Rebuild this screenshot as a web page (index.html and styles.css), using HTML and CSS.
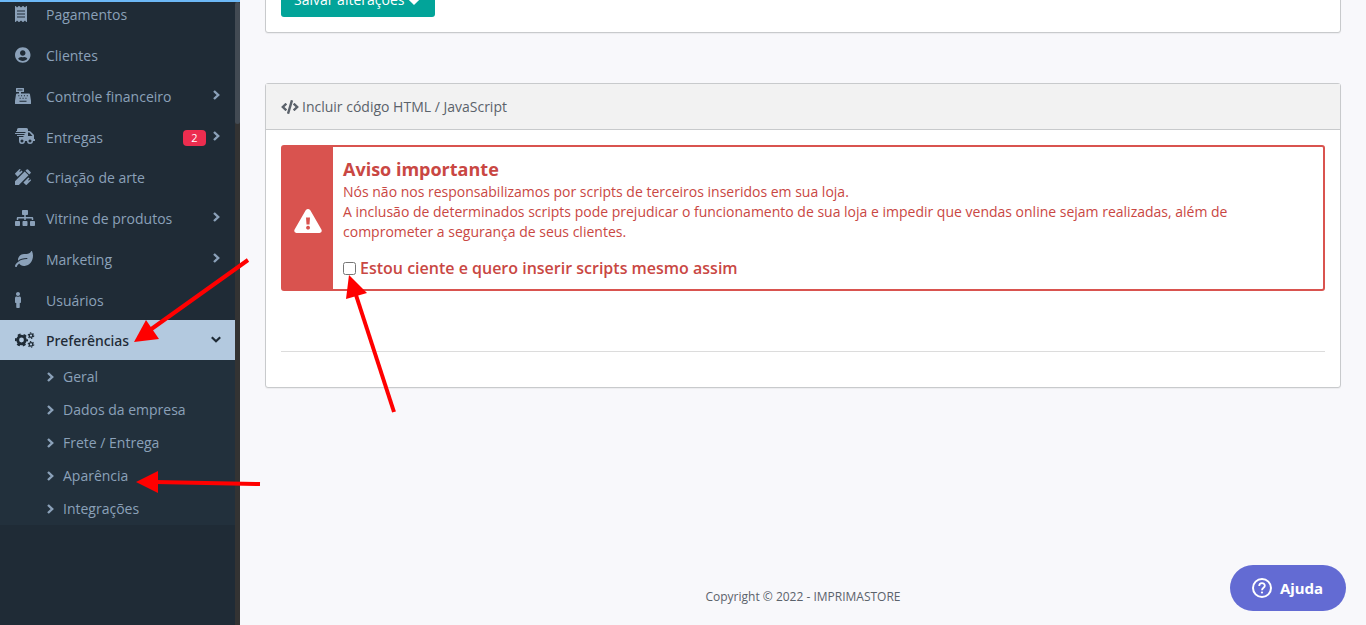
FILE: index.html
```html
<!DOCTYPE html>
<html lang="pt-BR">
<head>
  <meta charset="utf-8">
  <title>Aparência - Imprimastore</title>
  <link rel="stylesheet" href="styles.css">
</head>
<body>
  <svg class="sprite" aria-hidden="true">
    <symbol id="chevron-right" viewBox="0 0 10 12"><path d="M2 2 L6.2 6 L2 10" fill="none" stroke="currentColor" stroke-width="2.4"/></symbol>
    <symbol id="chevron-down" viewBox="0 0 12 10"><path d="M1.8 3.2 L6 7.2 L10.2 3.2" fill="none" stroke="currentColor" stroke-width="2.2"/></symbol>
  </svg>

  <div class="layout">
    <aside class="sidebar">
      <nav class="menu">
        <a href="#" class="menu-item">
          <svg class="icon" preserveAspectRatio="xMinYMid" viewBox="0 0 384 512"><path fill-rule="evenodd" d="M358.4 3.2L320 48 265.6 3.2a15.9 15.9 0 0 0-19.2 0L192 48 137.6 3.2a15.9 15.9 0 0 0-19.2 0L64 48 25.6 3.2C15-4.7 0 2.8 0 16v480c0 13.2 15 20.7 25.6 12.8L64 464l54.4 44.8a15.9 15.9 0 0 0 19.2 0L192 464l54.4 44.8a15.9 15.9 0 0 0 19.2 0L320 464l38.4 44.8c10.5 7.9 25.6.4 25.6-12.8V16c0-13.2-15-20.7-25.6-12.8zM64 336h256v32H64zM64 240h256v32H64zM64 144h256v32H64z"/></svg>
          <span class="label">Pagamentos</span>
        </a>
        <a href="#" class="menu-item">
          <svg class="icon" preserveAspectRatio="xMinYMid" viewBox="0 0 496 512"><path d="M248 8C111 8 0 119 0 256s111 248 248 248 248-111 248-248S385 8 248 8zm0 96c48.6 0 88 39.4 88 88s-39.4 88-88 88-88-39.4-88-88 39.4-88 88-88zm0 344c-58.7 0-111.3-26.6-146.5-68.2 18.8-35.4 55.6-59.8 98.5-59.8 2.4 0 4.8.4 7.1 1.1 13 4.2 26.6 6.9 40.9 6.9 14.3 0 28-2.7 40.9-6.9 2.3-.7 4.7-1.1 7.1-1.1 42.9 0 79.7 24.4 98.5 59.8C359.3 421.4 306.7 448 248 448z"/></svg>
          <span class="label">Clientes</span>
        </a>
        <a href="#" class="menu-item">
          <svg class="icon" preserveAspectRatio="xMinYMid" viewBox="0 0 512 512"><path fill-rule="evenodd" d="M48 0h224q16 0 16 16v96q0 16-16 16h-80v48h256q28 0 32 28l32 200v92q0 16-16 16H16q-16 0-16-16v-92l32-200q4-28 32-28h64v-48H48q-16 0-16-16V16Q32 0 48 0zM80 48v32h160V48zM104 232v32h36v-32zM192 232v32h36v-32zM284 232v32h36v-32zM376 232v32h36v-32zM148 312v32h36v-32zM240 312v32h36v-32zM332 312v32h36v-32zM144 408v32h224v-32z"/></svg>
          <span class="label">Controle financeiro</span>
          <svg class="arrow" width="10" height="12"><use href="#chevron-right"/></svg>
        </a>
        <a href="#" class="menu-item has-badge">
          <svg class="icon" preserveAspectRatio="xMinYMid" viewBox="0 0 640 512"><path fill-rule="evenodd" d="M112 0h256q48 0 48 48v48h48q18 0 32 14l98 98q14 14 14 32v112h16q16 0 16 16v32q0 16-16 16h-48a96 96 0 0 1-192 0h-64a96 96 0 0 1-192 0v-128h136q8 0 8-8v-16q0-8-8-8H64v-32h232q8 0 8-8v-16q0-8-8-8H8q-8 0-8-8v-16q0-8 8-8h320q8 0 8-8v-16q0-8-8-8H40q-8 0-8-8v-16q0-8 8-8h24V48q0-48 48-48zM416 144v112h144l-100-112zM224 368a48 48 0 1 0 .1 0zM480 368a48 48 0 1 0 .1 0z"/></svg>
          <span class="label">Entregas</span>
          <span class="badge">2</span>
          <svg class="arrow" width="10" height="12"><use href="#chevron-right"/></svg>
        </a>
        <a href="#" class="menu-item">
          <svg class="icon" preserveAspectRatio="xMinYMid" viewBox="0 0 512 512"><path d="M9 137 137 9q16-16 32 0l14 14-46 46 23 23 46-46 38 38L84 244 9 169q-16-16 0-32zM428 268l38 38-46 46 23 23 46-46 14 14q16 16 0 32L375 503q-16 16-32 0l-75-75zM496 94 418 16q-22-22-45 0l-40 40 123 123 40-40q22-22 0-45zM310 79 0 389V492q0 20 20 20h103l310-310z"/></svg>
          <span class="label">Criação de arte</span>
        </a>
        <a href="#" class="menu-item">
          <svg class="icon" preserveAspectRatio="xMinYMid" viewBox="0 0 640 512"><path d="M128 352H32c-17.67 0-32 14.33-32 32v96c0 17.67 14.33 32 32 32h96c17.67 0 32-14.33 32-32v-96c0-17.67-14.33-32-32-32zm-24-80h192v48h48v-48h192v48h48v-57.59c0-21.17-17.23-38.41-38.41-38.41H344v-64h40c17.67 0 32-14.33 32-32V32c0-17.67-14.33-32-32-32H256c-17.67 0-32 14.33-32 32v96c0 17.67 14.33 32 32 32h40v64H94.41C73.23 224 56 241.23 56 262.41V320h48v-48zm264 80h-96c-17.67 0-32 14.33-32 32v96c0 17.67 14.33 32 32 32h96c17.67 0 32-14.33 32-32v-96c0-17.67-14.33-32-32-32zm240 0h-96c-17.67 0-32 14.33-32 32v96c0 17.67 14.33 32 32 32h96c17.67 0 32-14.33 32-32v-96c0-17.67-14.33-32-32-32z"/></svg>
          <span class="label">Vitrine de produtos</span>
          <svg class="arrow" width="10" height="12"><use href="#chevron-right"/></svg>
        </a>
        <a href="#" class="menu-item">
          <svg class="icon" preserveAspectRatio="xMinYMid" viewBox="0 0 576 512"><path d="M546.2 9.7c-5.6-12.5-21.6-13-28.3-1.2C486.9 62.4 431.4 96 368 96h-80C182 96 96 182 96 288c0 7 .8 13.7 1.5 20.5C161.3 262.8 253.4 224 384 224c8.8 0 16 7.2 16 16s-7.2 16-16 16C132.6 256 26 410.1 2.4 468c-6.6 16.3 1.2 34.9 17.5 41.6 16.4 6.8 35-1.1 41.8-17.3 1.5-3.6 20.9-47.9 71.9-90.6 32.4 43.9 94 85.8 174.9 77.2C465.5 467.5 576 326.7 576 154.3c0-50.2-10.8-102.2-29.8-144.6z"/></svg>
          <span class="label">Marketing</span>
          <svg class="arrow" width="10" height="12"><use href="#chevron-right"/></svg>
        </a>
        <a href="#" class="menu-item">
          <svg class="icon" preserveAspectRatio="xMinYMid" viewBox="0 0 192 512"><path d="M96 0c35.346 0 64 28.654 64 64s-28.654 64-64 64-64-28.654-64-64S60.654 0 96 0m48 144h-11.36c-22.711 10.443-49.59 10.894-73.28 0H48c-26.51 0-48 21.49-48 48v136c0 13.255 10.745 24 24 24h16v136c0 13.255 10.745 24 24 24h64c13.255 0 24-10.745 24-24V352h16c13.255 0 24-10.745 24-24V192c0-26.51-21.49-48-48-48z"/></svg>
          <span class="label">Usuários</span>
        </a>
        <a href="#" class="menu-item active">
          <svg class="icon" preserveAspectRatio="xMinYMid" viewBox="0 0 20 16">
            <g fill="none" stroke="currentColor">
              <circle cx="6.5" cy="8" r="3.8" stroke-width="2.8"/>
              <circle cx="6.5" cy="8" r="5.6" stroke-width="1.9" stroke-dasharray="2.9 2.96" stroke-dashoffset="1.5"/>
              <circle cx="16" cy="3.6" r="1.8" stroke-width="1.3"/>
              <circle cx="16" cy="3.6" r="2.8" stroke-width="1.1" stroke-dasharray="1.4 1.53"/>
              <circle cx="16" cy="12.4" r="1.8" stroke-width="1.3"/>
              <circle cx="16" cy="12.4" r="2.8" stroke-width="1.1" stroke-dasharray="1.4 1.53"/>
            </g>
          </svg>
          <span class="label">Preferências</span>
          <svg class="arrow" width="12" height="10"><use href="#chevron-down"/></svg>
        </a>
        <div class="submenu">
          <a href="#"><svg width="10" height="12"><use href="#chevron-right"/></svg>Geral</a>
          <a href="#"><svg width="10" height="12"><use href="#chevron-right"/></svg>Dados da empresa</a>
          <a href="#"><svg width="10" height="12"><use href="#chevron-right"/></svg>Frete / Entrega</a>
          <a href="#"><svg width="10" height="12"><use href="#chevron-right"/></svg>Aparência</a>
          <a href="#"><svg width="10" height="12"><use href="#chevron-right"/></svg>Integrações</a>
        </div>
      </nav>
      <div class="scroll-track"><div class="scroll-thumb"></div></div>
    </aside>

    <main class="content">
      <section class="card card-save">
        <div class="card-body">
          <button type="button" class="btn-save">Salvar alterações
            <svg viewBox="0 0 12 12" width="14" height="14"><path d="M1.5 3.8 L6 8.2 L10.5 3.8" fill="none" stroke="currentColor" stroke-width="3"/></svg>
          </button>
        </div>
      </section>

      <section class="card">
        <div class="card-header">
          <svg viewBox="0 0 640 512" width="18" height="14"><path d="M278.9 511.5l-61-17.7c-6.4-1.8-10-8.5-8.2-14.9L346.2 8.7c1.8-6.4 8.5-10 14.9-8.2l61 17.7c6.4 1.8 10 8.5 8.2 14.9L293.8 503.3c-1.9 6.4-8.5 10.1-14.9 8.2zm-114-112.2l43.5-46.4c4.6-4.9 4.3-12.7-.8-17.2L117 256l90.6-79.7c5.1-4.5 5.5-12.3.8-17.2l-43.5-46.4c-4.5-4.8-12.1-5.1-17-.5L3.8 247.2c-5.1 4.7-5.1 12.8 0 17.5l144.1 135.1c4.9 4.6 12.5 4.4 17-.5zm327.2.6l144.1-135.1c5.1-4.7 5.1-12.8 0-17.5L492.1 112.1c-4.8-4.5-12.4-4.3-17 .5L431.6 159c-4.6 4.9-4.3 12.7.8 17.2L523 256l-90.6 79.7c-5.1 4.5-5.5 12.3-.8 17.2l43.5 46.4c4.5 4.9 12.1 5.1 17 .6z"/></svg>
          Incluir código HTML / JavaScript
        </div>
        <div class="card-body">
          <div class="alert">
            <div class="alert-icon">
              <svg viewBox="0 0 28 24" width="28" height="24"><path fill-rule="evenodd" d="M11.7 1.200Q14-1 16.300 1.200L27.400 20.500Q28.600 23.600 25.600 24H2.400Q-.6 23.600.6 20.500zM12 8.500L12.500 15.500H15.500L16 8.500zM14 16.800a1.900 1.900 0 1 0 .1 0z"/></svg>
            </div>
            <div class="alert-body">
              <h4>Aviso importante</h4>
              <p>Nós não nos responsabilizamos por scripts de terceiros inseridos em sua loja.<br>
              A inclusão de determinados scripts pode prejudicar o funcionamento de sua loja e impedir que vendas online sejam realizadas, além de comprometer a segurança de seus clientes.</p>
              <label class="accept" for="accept_scripts"><input type="checkbox" id="accept_scripts"> Estou ciente e quero inserir scripts mesmo assim</label>
            </div>
          </div>
          <hr>
        </div>
      </section>

      <footer>Copyright © 2022 - IMPRIMASTORE</footer>
    </main>
  </div>

  <button type="button" class="help">
    <svg viewBox="0 0 20 20" width="20" height="20"><circle cx="10" cy="10" r="9" fill="none" stroke="currentColor" stroke-width="2"/><path d="M7.2 8 C7.2 4.300 12.800 4.300 12.800 7.700 C12.800 9.800 10 9.700 10 12.200" fill="none" stroke="currentColor" stroke-width="1.8"/><circle cx="10" cy="14.5" r="1.1"/></svg>
    Ajuda
  </button>

  <svg class="pointers" width="270" height="175" viewBox="0 0 270 175" aria-hidden="true">
    <g stroke="#f00" stroke-width="4" fill="#f00">
      <path d="M248 10 L150 80"/>
      <path d="M134 92 L146 70 L159 89 Z" stroke="none"/>
      <path d="M260 234 L155 232"/>
      <path d="M136 232 L158 221 L158 243 Z" stroke="none"/>
      <path d="M394 162 L355 42"/>
      <path d="M349 25 L346 49 L367 43 Z" stroke="none"/>
    </g>
  </svg>
</body>
</html>
```
FILE: styles.css
```css
* { box-sizing: border-box; }
body {
  margin: 0;
  font-family: "Open Sans", sans-serif;
  font-size: 14px;
  line-height: 20px;
  color: #5b626b;
  background: #f8f8fb;
}
svg { display: block; flex: none; fill: currentColor; }
.sprite { position: absolute; width: 0; height: 0; }
.layout { display: flex; height: 100vh; overflow: hidden; }

/* sidebar */
.sidebar {
  display: flex;
  width: 240px;
  flex: none;
  background: #1f2b36;
  border-top: 2px solid #6cb8f6;
  overflow: hidden;
}
.menu { flex: 1; margin-top: -9px; }
.menu-item {
  display: flex;
  align-items: center;
  height: 41px;
  padding: 3px 13px 0 15px;
  color: #8ba1b9;
  text-decoration: none;
}
.menu-item.has-badge { height: 40px; }
.icon { width: 20px; height: 16px; margin: 0 11px 3px 0; }
.label { margin-right: auto; }
.arrow { margin-bottom: 4px; }
.menu-item.active {
  height: 40px;
  padding-top: 2px;
  font-family: "Noto Sans", sans-serif;
  font-weight: 500;
  color: #1f2b36;
  background: #b3c9df;
}
.badge {
  width: 23px;
  margin-right: 6px;
  border-radius: 4px;
  font-size: 11px;
  line-height: 16px;
  text-align: center;
  color: #fff;
  background: #ec2d4f;
}
.submenu { background: #22303c; }
.submenu a {
  display: flex;
  align-items: center;
  gap: 7px;
  height: 33px;
  padding-left: 46px;
  color: #8ba1b9;
  text-decoration: none;
}
.scroll-track { width: 5px; background: #333; }
.scroll-thumb { height: 122px; border-radius: 3px; background: #424a53; }

/* content */
.content {
  display: flex;
  flex: 1;
  flex-direction: column;
  padding: 0 25px 18px;
}
.card {
  margin-bottom: 50px;
  border: 1px solid #c8cacc;
  border-radius: 3px;
  background: #fff;
  box-shadow: 0 1px 1px rgba(0, 0, 0, .05);
}
.card-save { margin-top: -33px; }
.card-header {
  display: flex;
  align-items: center;
  gap: 3px;
  padding: 13px 15px 12px;
  border-bottom: 1px solid #c8cacc;
  background: #f2f2f2;
}
.card-body { padding: 15px; }
.btn-save {
  display: flex;
  align-items: center;
  gap: 3px;
  height: 34px;
  padding: 0 14px 0 13px;
  border: 0;
  border-radius: 3px;
  font: inherit;
  color: #fff;
  background: #02a499;
}
.alert {
  display: flex;
  border: 2px solid #d9534f;
  border-radius: 3px;
  color: #c94743;
}
.alert-icon {
  display: flex;
  align-items: center;
  justify-content: center;
  width: 50px;
  flex: none;
  padding-top: 6px;
  color: #fff;
  background: #d9534f;
}
.alert-body { padding: 10px 10px 11px; }
.alert h4 { margin: 0; font-size: 18px; font-weight: 700; line-height: 25px; }
.alert p { margin: 0 0 16px; }
.accept {
  display: flex;
  align-items: center;
  gap: 4px;
  font-size: 16px;
  font-weight: 600;
}
.accept input { width: 13px; height: 13px; margin: 0; }
hr { margin: 60px 0 20px; border: 0; border-top: 1px solid #dcdcdc; }
footer { margin-top: auto; font-size: 12px; text-align: center; }

/* floating help button */
.help {
  position: fixed;
  right: 20px;
  bottom: 14px;
  display: flex;
  align-items: center;
  gap: 8px;
  height: 46px;
  padding: 0 23px 0 22px;
  border: 0;
  border-radius: 23px;
  font: 700 15px "Noto Sans", sans-serif;
  color: #fff;
  background: #636bd3;
}
.pointers { position: absolute; top: 250px; left: 0; overflow: visible; pointer-events: none; }
```
